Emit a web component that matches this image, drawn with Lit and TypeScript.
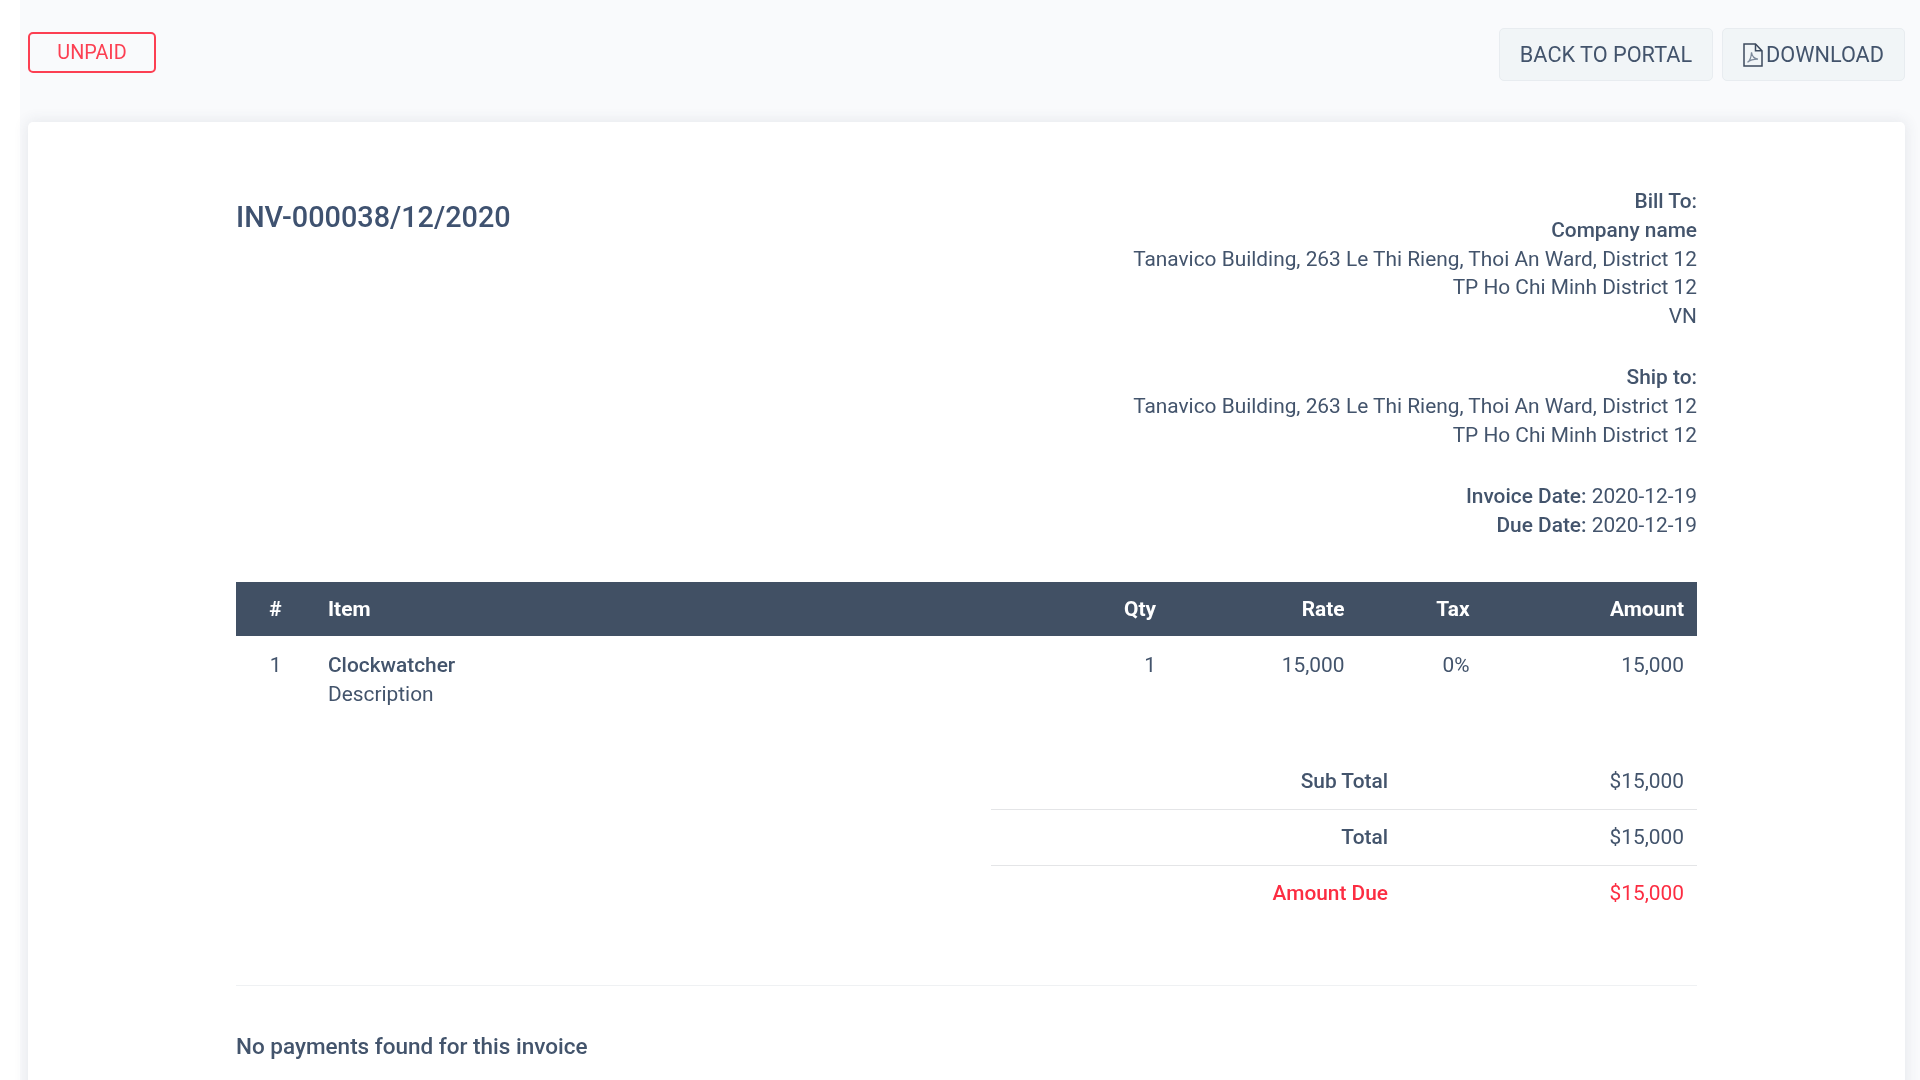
import { LitElement, html, css } from "lit";
import { customElement } from "lit/decorators.js";

@customElement("app-root")
export class AppRoot extends LitElement {
  static styles = css`
    :host {
      display: block;
      height: 100vh;
      overflow: hidden;
      background: #fff;
      padding-left: 20px;
      font-family: Roboto, "Liberation Sans", sans-serif;
      font-size: 20.870px;
      line-height: 28.8px;
      color: #43546c;
    }
    .page {
      background: #f9fafc;
      height: 100%;
      padding: 28px 15px 0 8px;
      box-sizing: border-box;
      filter: blur(0.35px);
    }
    .top {
      display: flex;
      justify-content: space-between;
      align-items: flex-start;
      height: 94px;
    }
    .status {
      margin-top: 4px;
      box-sizing: border-box;
      width: 128px;
      height: 41px;
      border: 2px solid #fc3f52;
      border-radius: 5px;
      color: #fc3f52;
      display: flex;
      align-items: center;
      justify-content: center;
      font-size: 19.8px;
      padding-top: 1px;
    }
    .actions { display: flex; gap: 9px; }
    .btn {
      box-sizing: border-box;
      height: 53px;
      padding: 1px 19.500px 0;
      display: flex;
      align-items: center;
      gap: 3px;
      background: #f1f5f7;
      border: 1px solid #e8ecf0;
      border-radius: 5px;
      font-size: 21.700px;
      color: #43546c;
    }
    .btn.dl { padding-left: 20.500px; padding-right: 20px; }
    .btn svg { width: 20px; height: 24px; flex: none; }
    .card {
      background: #fff;
      border-radius: 5px;
      box-shadow: 0 0 14px 2px rgba(60, 70, 90, 0.09);
      padding: 65px 208px 0 208px;
      height: 1100px;
      box-sizing: border-box;
    }
    .head { display: flex; justify-content: space-between; align-items: flex-start; }
    h1 {
      margin: 12px 0 0;
      font-size: 28.800px;
      font-weight: 500;
      line-height: 36px;
      color: #3f5270;
    }
    .addr { text-align: right; }
    .addr p { margin: 0 0 32.500px; }
    .addr p:last-child { margin: 0; }
    b { font-weight: 500; }
    table {
      width: 100%;
      border-collapse: collapse;
      table-layout: fixed;
      margin-top: 42px;
    }
    th {
      background: #415064;
      color: #fff;
      font-weight: 700;
      height: 54px;
      padding: 0 13px;
      text-align: right;
    }
    td { padding: 15px 13px 0; text-align: right; vertical-align: top; }
    th.c, td.c { text-align: center; }
    th.l, td.l { text-align: left; }
    .totals {
      margin: 45px 0 0 auto;
      width: 706px;
    }
    .t-row {
      display: grid;
      grid-template-columns: 397px 1fr;
      height: 56px;
      align-items: center;
      text-align: right;
      padding-right: 13px;
      border-bottom: 1px solid #e4e5e7;
      box-sizing: border-box;
    }
    .t-row:last-child { border-bottom: 0; }
    .t-row b { font-weight: 500; }
    .due { color: #fc2d42; }
    hr {
      border: 0;
      border-top: 1px solid #eff1f3;
      margin: 63px 0 0;
    }
    .none { margin: 46px 0 0; font-weight: 500; font-size: 22.500px; }
  `;

  render() {
    return html`
      <div class="page">
        <div class="top">
          <div class="status">UNPAID</div>
          <div class="actions">
            <a class="btn">BACK TO PORTAL</a>
            <a class="btn dl">
              <svg viewBox="0 0 20 23" preserveAspectRatio="none" fill="none" stroke="#3c4a5e" stroke-width="1.500">
                <path d="M1 1h11.500l6.500 6.500V22H1z" />
                <path d="M12.500 1v6.500H19" />
                <path stroke="#7d8a9b" stroke-width="1.200" d="M4.500 18.500c2-1 3.700-5 4-9.500.5 3.500 2.500 6 6.500 6.500-3.500 0-8 .8-10.500 3z" />
              </svg>
              DOWNLOAD
            </a>
          </div>
        </div>
        <section class="card">
          <div class="head">
            <h1>INV-000038/12/2020</h1>
            <div class="addr">
              <p>
                <b>Bill To:</b><br />
                <b>Company name</b><br />
                Tanavico Building, 263 Le Thi Rieng, Thoi An Ward, District 12<br />
                TP Ho Chi Minh District 12<br />
                VN
              </p>
              <p>
                <b>Ship to:</b><br />
                Tanavico Building, 263 Le Thi Rieng, Thoi An Ward, District 12<br />
                TP Ho Chi Minh District 12
              </p>
              <p>
                <b>Invoice Date:</b> 2020-12-19<br />
                <b>Due Date:</b> 2020-12-19
              </p>
            </div>
          </div>
          <table>
            <colgroup>
              <col style="width:79px" />
              <col />
              <col style="width:100px" />
              <col style="width:188.500px" />
              <col style="width:125px" />
              <col style="width:214.500px" />
            </colgroup>
            <thead>
              <tr>
                <th class="c">#</th>
                <th class="l">Item</th>
                <th>Qty</th>
                <th>Rate</th>
                <th>Tax</th>
                <th>Amount</th>
              </tr>
            </thead>
            <tbody>
              <tr>
                <td class="c">1</td>
                <td class="l"><b>Clockwatcher</b><br />Description</td>
                <td>1</td>
                <td>15,000</td>
                <td>0%</td>
                <td>15,000</td>
              </tr>
            </tbody>
          </table>
          <div class="totals">
            <div class="t-row"><b>Sub Total</b><span>$15,000</span></div>
            <div class="t-row"><b>Total</b><span>$15,000</span></div>
            <div class="t-row due"><b>Amount Due</b><span>$15,000</span></div>
          </div>
          <hr />
          <p class="none">No payments found for this invoice</p>
        </section>
      </div>
    `;
  }
}
